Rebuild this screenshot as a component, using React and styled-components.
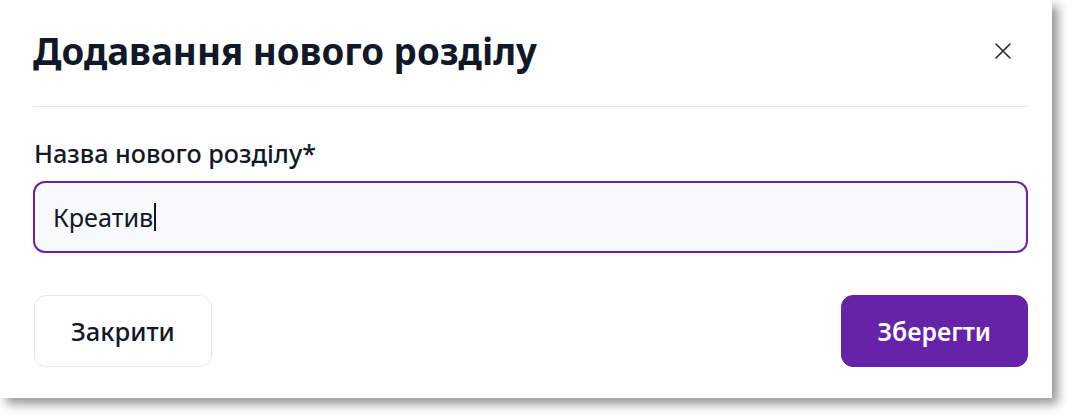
import React from "react";
import styled, { createGlobalStyle } from "styled-components";

const GlobalStyle = createGlobalStyle`
  html, body {
    margin: 0;
    padding: 0;
    background: #ffffff;
  }
  body {
    font-family: "Noto Sans", "Open Sans", "Liberation Sans", sans-serif;
    color: #111827;
  }
  * { box-sizing: border-box; }
`;

const Page = styled.div`
  width: 1072px;
  height: 418px;
  background: #ffffff;
`;

const Modal = styled.div`
  width: 1052px;
  height: 398px;
  background: #ffffff;
  box-shadow: 6px 6px 10px rgba(0, 0, 0, 0.42);
  display: flex;
  flex-direction: column;
`;

const Header = styled.header`
  display: flex;
  align-items: flex-start;
  justify-content: space-between;
  margin: 0 24px 0 33px;
  padding: 27px 0 31px;
  border-bottom: 1px solid #e5e7eb;
`;

const Title = styled.h2`
  margin: 0;
  font-size: 36.7px;
  line-height: 48px;
  font-weight: 700;
  color: #111827;
`;

const CloseButton = styled.button`
  width: 24px;
  height: 24px;
  margin: 12px 13px 0 0;
  padding: 0;
  border: none;
  background: transparent;
  color: #1f2937;
  display: flex;
  align-items: center;
  justify-content: center;
  cursor: pointer;
`;

const Body = styled.div`
  display: flex;
  flex-direction: column;
  padding: 28px 24px 0 33px;
`;

const Label = styled.label`
  font-size: 25.2px;
  line-height: 36px;
  font-weight: 500;
  color: #111827;
  margin-bottom: 10px;
  margin-left: 1px;
`;

const InputBox = styled.div`
  height: 72px;
  border: 2px solid #6b21a8;
  border-radius: 12px;
  background: #f8f9fb;
  padding: 0 18px;
  display: flex;
  align-items: center;
  font-size: 25.2px;
  color: #111827;
`;

const Caret = styled.span`
  display: inline-block;
  width: 2px;
  height: 28px;
  background: #111827;
  margin-left: 1px;
`;

const Footer = styled.div`
  display: flex;
  justify-content: space-between;
  padding: 42px 24px 0 33px;
`;

const Button = styled.button`
  height: 72px;
  padding: 0 36px;
  border-radius: 12px;
  font-family: inherit;
  font-size: ${(p) => (p.$primary ? "24.8px" : "25.5px")};
  cursor: pointer;
  border: 1px solid ${(p) => (p.$primary ? "#6622a8" : "#e5e7eb")};
  background: ${(p) => (p.$primary ? "#6622a8" : "#ffffff")};
  color: ${(p) => (p.$primary ? "#ffffff" : "#111827")};
  font-weight: ${(p) => (p.$primary ? 600 : 500)};
  margin-left: ${(p) => (p.$primary ? "0" : "1px")};
`;

export default function App() {
  return (
    <Page>
      <GlobalStyle />
      <Modal>
        <Header>
          <Title>Додавання нового розділу</Title>
          <CloseButton aria-label="close">
            <svg width="16" height="16" viewBox="0 0 16 16" fill="none">
              <path
                d="M1 1L15 15M15 1L1 15"
                stroke="currentColor"
                strokeWidth="1.6"
                strokeLinecap="round"
              />
            </svg>
          </CloseButton>
        </Header>
        <Body>
          <Label>Назва нового розділу*</Label>
          <InputBox>
            <span>Креатив</span>
            <Caret />
          </InputBox>
        </Body>
        <Footer>
          <Button>Закрити</Button>
          <Button $primary>Зберегти</Button>
        </Footer>
      </Modal>
    </Page>
  );
}
